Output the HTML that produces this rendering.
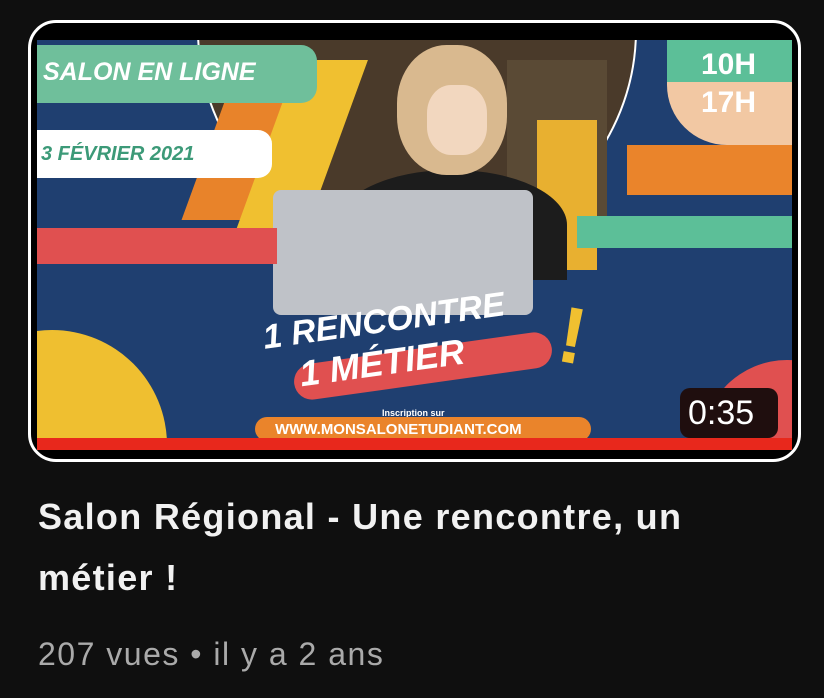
<!DOCTYPE html>
<html><head><meta charset="utf-8"><style>
*{margin:0;padding:0;box-sizing:border-box}
body{width:824px;height:698px;background:#0f0f0f;position:relative;overflow:hidden;font-family:"Liberation Sans",sans-serif}
.frame{position:absolute;left:28px;top:20px;width:773px;height:442px;border:3px solid #fff;border-radius:28px;background:#000;overflow:hidden}
.img{position:absolute;left:6px;top:17px;width:755px;height:398px;background:#1f3f70;overflow:hidden}
.a{position:absolute}
.t{position:absolute;color:#fff;font-weight:bold;white-space:nowrap}
</style></head><body>
<div class="frame">
 <div class="img">
  <div class="a" style="left:160px;top:-230px;width:440px;height:440px;border-radius:50%;background:#4a3a2a;border:2px solid #fff"></div>
  <div class="a" style="left:170px;top:40px;width:90px;height:140px;background:#e8832a;transform:skewX(-20deg)"></div>
  <div class="a" style="left:230px;top:20px;width:70px;height:170px;background:#f0c030;transform:skewX(-20deg)"></div>
  <div class="a" style="left:470px;top:20px;width:100px;height:170px;background:#5a4a35"></div>
  <div class="a" style="left:500px;top:80px;width:60px;height:150px;background:#e8b030"></div>
  <div class="a" style="left:300px;top:130px;width:230px;height:110px;border-radius:50% 50% 0 0;background:#1c1c1c"></div>
  <div class="a" style="left:360px;top:5px;width:110px;height:130px;border-radius:45%;background:#d9b98f"></div>
  <div class="a" style="left:390px;top:45px;width:60px;height:70px;border-radius:40%;background:#f2d7bf"></div>
  <div class="a" style="left:236px;top:150px;width:260px;height:125px;background:#bfc2c8;border-radius:8px"></div>
  <div class="a" style="left:0;top:5px;width:280px;height:58px;background:#6fbf9b;border-radius:0 16px 16px 0"></div>
  <div class="t" style="left:6px;top:18px;font-size:25px;font-style:italic">SALON EN LIGNE</div>
  <div class="a" style="left:0;top:90px;width:235px;height:48px;background:#fff;border-radius:0 14px 14px 0"></div>
  <div class="t" style="left:4px;top:103px;font-size:20px;font-style:italic;color:#3c9a78">3 FÉVRIER 2021</div>
  <div class="a" style="left:0;top:188px;width:240px;height:36px;background:#e05050"></div>
  <div class="a" style="left:630px;top:0;width:125px;height:105px;background:#f2c8a3;border-radius:0 0 0 60px"></div>
  <div class="a" style="left:630px;top:0;width:125px;height:42px;background:#5cbf98"></div>
  <div class="t" style="left:664px;top:8px;font-size:30px">10H</div>
  <div class="t" style="left:664px;top:46px;font-size:30px">17H</div>
  <div class="a" style="left:590px;top:105px;width:165px;height:50px;background:#ea842b"></div>
  <div class="a" style="left:540px;top:176px;width:215px;height:32px;background:#5cbf98"></div>
  <div class="a" style="left:-100px;top:290px;width:230px;height:230px;border-radius:50%;background:#efbf30"></div>
  <div class="a" style="left:665px;top:320px;width:170px;height:170px;border-radius:50%;background:#e05050"></div>
  <div class="a" style="left:256px;top:308px;width:260px;height:36px;background:#e05050;border-radius:18px;transform:rotate(-8deg)"></div>
  <div class="t" style="left:225px;top:262px;font-size:34px;font-style:italic;transform:rotate(-8deg)">1 RENCONTRE</div>
  <div class="t" style="left:262px;top:302px;font-size:36px;font-style:italic;transform:rotate(-8deg)">1 MÉTIER</div>
  <div class="t" style="left:522px;top:250px;font-size:80px;color:#f0c030;transform:rotate(10deg)">!</div>
  <div class="t" style="left:345px;top:368px;font-size:9px">Inscription sur</div>
  <div class="a" style="left:218px;top:377px;width:336px;height:24px;background:#ea842b;border-radius:12px"></div>
  <div class="t" style="left:238px;top:381px;font-size:15px">WWW.MONSALONETUDIANT.COM</div>
 </div>
 <div class="a" style="left:6px;top:415px;width:755px;height:12px;background:#e8281c"></div>
 <div class="a" style="left:649px;top:365px;width:98px;height:50px;background:#1f0e0e;border-radius:10px"></div>
 <div class="t" style="left:657px;top:371px;font-size:34px;font-weight:normal">0:35</div>
</div>
<div class="t" style="left:38px;top:496px;font-size:36px;color:#f1f1f1;letter-spacing:1.3px">Salon Régional - Une rencontre, un</div>
<div class="t" style="left:38px;top:557px;font-size:36px;color:#f1f1f1;letter-spacing:1.3px">métier !</div>
<div class="t" style="left:38px;top:636px;font-size:32px;font-weight:normal;color:#aaa;letter-spacing:1.5px">207 vues • il y a 2 ans</div>
</body></html>
